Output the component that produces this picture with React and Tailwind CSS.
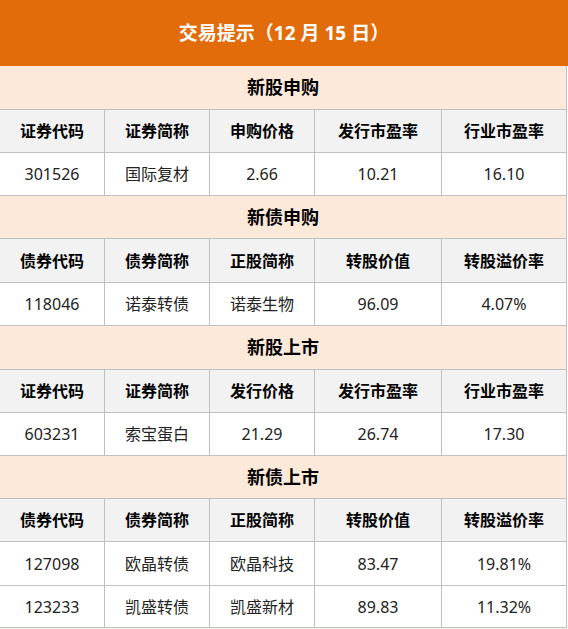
const sections = [
  {
    title: '新股申购',
    head: ['证券代码', '证券简称', '申购价格', '发行市盈率', '行业市盈率'],
    rows: [['301526', '国际复材', '2.66', '10.21', '16.10']],
    h: ['h-[44px]', 'h-[43px]', ['h-[43px]']],
  },
  {
    title: '新债申购',
    head: ['债券代码', '债券简称', '正股简称', '转股价值', '转股溢价率'],
    rows: [['118046', '诺泰转债', '诺泰生物', '96.09', '4.07%']],
    h: ['h-[43px]', 'h-[44px]', ['h-[43px]']],
  },
  {
    title: '新股上市',
    head: ['证券代码', '证券简称', '发行价格', '发行市盈率', '行业市盈率'],
    rows: [['603231', '索宝蛋白', '21.29', '26.74', '17.30']],
    h: ['h-[44px]', 'h-[43px]', ['h-[43px]']],
  },
  {
    title: '新债上市',
    head: ['债券代码', '债券简称', '正股简称', '转股价值', '转股溢价率'],
    rows: [
      ['127098', '欧晶转债', '欧晶科技', '83.47', '19.81%'],
      ['123233', '凯盛转债', '凯盛新材', '89.83', '11.32%'],
    ],
    h: ['h-[43px]', 'h-[43px]', ['h-[44px]', 'h-[42px]']],
  },
];

// column widths incl. right border
const cols = ['w-[105px]', 'w-[105px]', 'w-[105px]', 'w-[127px]', 'w-[125px]'];

function Row({ cells, head, h }) {
  return (
    <div className={`flex ${h} border-b border-[#bfbfbf] ${head ? 'bg-[#f2f2f2]' : 'bg-white'}`}>
      {cells.map((c, i) => (
        <div key={i}
          className={`${cols[i]} shrink-0 flex items-center justify-center border-r border-[#bfbfbf] text-[16px] ${head ? 'font-bold text-black' : 'text-[#222]'}`}>
          {c}
        </div>
      ))}
    </div>
  );
}

export default function App() {
  return (
    <div className="w-[568px] h-[629px] bg-white overflow-hidden"
      style={{ fontFamily: '"Noto Sans", "Noto Sans CJK SC", sans-serif' }}>
      {/* title bar */}
      <div className="h-[66px] bg-[#e36c0a] flex items-center justify-center text-white font-bold text-[19px]">
        交易提示（12 月 15 日）
      </div>

      <div className="w-[567px]">
        {sections.map(s => (
          <div key={s.title}>
            <div className={`${s.h[0]} bg-[#fde9d9] border-b border-r border-[#bfbfbf] flex items-center justify-center font-bold text-[18px] text-black`}>
              {s.title}
            </div>
            <Row cells={s.head} head h={s.h[1]} />
            {s.rows.map((r, i) => <Row key={r[0]} cells={r} h={s.h[2][i]} />)}
          </div>
        ))}
      </div>
      <div className="h-px bg-[#eef6e6]" />
    </div>
  );
}
